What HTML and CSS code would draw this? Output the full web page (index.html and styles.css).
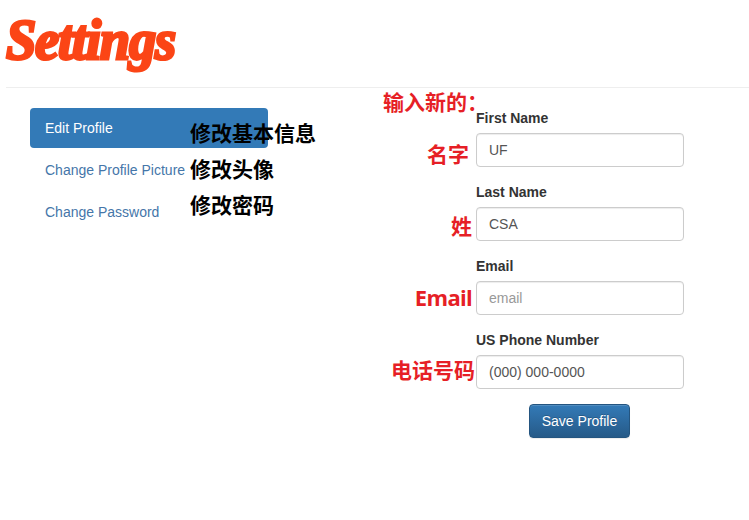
FILE: index.html
```html
<!DOCTYPE html>
<html lang="en">
<head>
<meta charset="utf-8">
<title>Settings</title>
<link rel="stylesheet" href="styles.css">
</head>
<body>
<header class="page-header"><h1 class="title">Settings</h1></header>
<main class="content">
  <nav class="nav">
    <a class="nav-item active">Edit Profile<span class="note note-basic" lang="zh-CN">修改基本信息</span></a>
    <a class="nav-item">Change Profile Picture<span class="note note-picture" lang="zh-CN">修改头像</span></a>
    <a class="nav-item">Change Password<span class="note note-password" lang="zh-CN">修改密码</span></a>
  </nav>
  <form class="form">
    <span class="note red note-enter" lang="zh-CN">输入新的：</span>
    <div class="group"><label for="first">First Name</label><input id="first" type="text" value="UF"><span class="note red note-first" lang="zh-CN">名字</span></div>
    <div class="group"><label for="last">Last Name</label><input id="last" type="text" value="CSA"><span class="note red note-last" lang="zh-CN">姓</span></div>
    <div class="group"><label for="email">Email</label><input id="email" type="text" placeholder="email"><span class="note red note-email">Email</span></div>
    <div class="group"><label for="phone">US Phone Number</label><input id="phone" type="text" value="(000) 000-0000"><span class="note red note-phone" lang="zh-CN">电话号码</span></div>
    <button class="save" type="button">Save Profile</button>
  </form>
</main>
</body>
</html>
```
FILE: styles.css
```css
* { box-sizing: border-box; }
body {
  margin: 0;
  height: 520px;
  overflow: hidden;
  background: #fff;
  color: #333;
  font: 14px/20px "Liberation Sans", Arial, sans-serif;
}
.page-header {
  height: 88px;
  margin-left: 6px;
  border-bottom: 1px solid #eee;
}
.title {
  display: inline-block;
  margin: 0;
  color: #fb4516;
  font: italic bold 58px/79px "Liberation Serif", serif;
  letter-spacing: -1.3px;
  -webkit-text-stroke: 3px #fb4516;
  stroke-linejoin: round;
  transform: scaleX(.94);
  transform-origin: left;
}
.content {
  display: flex;
  justify-content: space-between;
  padding: 20px 65px 0 30px;
}
.nav {
  display: flex;
  flex-direction: column;
  gap: 2px;
  width: 238px;
}
.nav-item {
  position: relative;
  height: 40px;
  padding: 10px 15px;
  border-radius: 4px;
  color: #4576a9;
}
.active { background: #337ab7; color: #fff; }
.form {
  position: relative;
  display: flex;
  flex-direction: column;
  width: 208px;
}
.group { position: relative; height: 74px; }
label { display: block; margin-bottom: 5px; font-weight: bold; }
input {
  display: block;
  width: 100%;
  height: 34px;
  padding: 6px 12px;
  border: 1px solid #ccc;
  border-radius: 4px;
  background: #fff;
  box-shadow: inset 0 1px 1px rgba(0, 0, 0, .075);
  color: #555;
  font: inherit;
}
input::placeholder { color: #999; opacity: 1; }
.save {
  width: 101px;
  height: 34px;
  margin-left: 53px;
  padding: 0;
  border: 1px solid #245580;
  border-radius: 4px;
  background: linear-gradient(#337ab7, #265a88);
  box-shadow: inset 0 1px 0 rgba(255, 255, 255, .15), 0 1px 1px rgba(0, 0, 0, .075);
  color: #fff;
  font: inherit;
  text-shadow: 0 -1px 0 rgba(0, 0, 0, .2);
}
.note {
  position: absolute;
  z-index: 1;
  color: #000;
  font: bold 21px/30px "Noto Sans CJK SC", sans-serif;
  white-space: nowrap;
}
.red { color: #e61f26; }
.note-basic { left: 160px; top: 9px; }
.note-picture { left: 160px; top: 3px; }
.note-password { left: 160px; top: -3px; }
.note-enter { left: -93px; top: -22px; }
.note-first { right: 215px; top: 30px; }
.note-last { right: 212px; top: 28px; }
.note-email { right: 212px; top: 26px; font-family: "Open Sans", "Noto Sans", sans-serif; font-size: 22px; letter-spacing: -.7px; }
.note-phone { right: 209px; top: 24px; }
```
